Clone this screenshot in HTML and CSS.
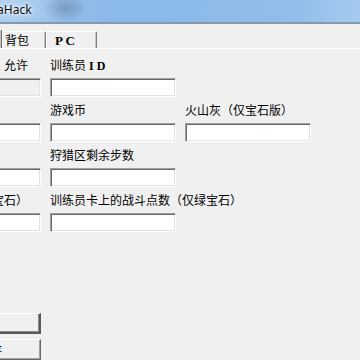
FILE: index.html
```html
<!DOCTYPE html>
<html lang="zh-CN">
<head>
    <meta charset="UTF-8">
    <meta name="viewport" content="width=device-width, initial-scale=1.0">
    <title>GbaHack</title>
    <link rel="stylesheet" href="styles.css">
</head>
<body>
    <div class="window">
        <div class="titlebar"><span class="title">GbaHack</span></div>

        <div class="tabs">
            <div class="tab selected">基本</div>
            <div class="tab tab-bag">背包</div>
            <div class="tab tab-pc"><span class="latin">P C</span></div>
        </div>

        <div class="panel">
            <div class="fields">
                <!-- row 1 -->
                <div class="field">
                    <div class="label right">修改训练员　 允许</div>
                    <input type="text" class="box" disabled>
                </div>
                <div class="field">
                    <div class="label">训练员<span class="latin id">I D</span></div>
                    <input type="text" class="box">
                </div>
                <div class="field"></div>

                <!-- row 2 -->
                <div class="field">
                    <div class="label">金钱</div>
                    <input type="text" class="box">
                </div>
                <div class="field">
                    <div class="label">游戏币</div>
                    <input type="text" class="box">
                </div>
                <div class="field">
                    <div class="label">火山灰（仅宝石版）</div>
                    <input type="text" class="box">
                </div>

                <!-- row 3 -->
                <div class="field">
                    <div class="label">时间</div>
                    <input type="text" class="box">
                </div>
                <div class="field">
                    <div class="label">狩猎区剩余步数</div>
                    <input type="text" class="box">
                </div>
                <div class="field"></div>

                <!-- row 4 -->
                <div class="field">
                    <div class="label right">（仅宝石）</div>
                    <input type="text" class="box">
                </div>
                <div class="field">
                    <div class="label">训练员卡上的战斗点数（仅绿宝石）</div>
                    <input type="text" class="box">
                </div>
                <div class="field"></div>
            </div>

            <div class="buttons">
                <button class="btn default">读取</button>
                <button class="btn">写入内存</button>
            </div>
        </div>
    </div>
</body>
</html>
```

FILE: styles.css
```css
body {
    margin: 0;
    width: 360px;
    height: 360px;
    overflow: hidden;
    background: #f0f0f0;
    font-family: "Noto Sans CJK SC", "Noto Sans", sans-serif;
    font-size: 12px;
    color: #000;
}
.window {
    margin-left: -85px;
    width: 470px;
}
.titlebar {
    height: 22px;
    border-bottom: 2px solid #8599b0;
    background:
        radial-gradient(ellipse 22px 14px at 150px 8px, rgba(90, 110, 140, 0.45), rgba(90, 110, 140, 0) 100%),
        radial-gradient(ellipse 70px 30px at 90px 8px, rgba(255, 255, 255, 0.35), rgba(255, 255, 255, 0) 100%),
        linear-gradient(100deg, #9cc5ec 0%, #8bb9e8 45%, #90bde9 80%, #aed0f1 100%);
    padding-left: 66px;
    display: flex;
    align-items: center;
}
.title {
    font-family: "Noto Sans", sans-serif;
    font-size: 12px;
    color: #101010;
    text-shadow: 0 0 6px #fff, 0 0 3px #fff;
    margin-top: -3px;
}
.latin {
    font-family: "Liberation Serif", serif;
    font-weight: bold;
}
.tabs {
    height: 24px;
    display: flex;
    align-items: flex-end;
    padding-left: 2px;
}
.tab {
    box-sizing: border-box;
    height: 17px;
    line-height: 15px;
    border-top: 1px solid #fff;
    border-left: 1px solid #fff;
    border-right: 1px solid #808080;
    box-shadow: inset -1px 0 #c4c4c4;
    border-top-right-radius: 2px;
    white-space: nowrap;
}
.tab.selected {
    width: 85px;
    height: 19px;
    padding-left: 4px;
    border-right-color: #6a6a6a;
}
.tab-bag {
    width: 44px;
    padding-left: 2px;
}
.tab-pc {
    width: 51px;
    padding-left: 8px;
    font-size: 13px;
}
.panel {
    border-top: 1px solid #fff;
    padding-top: 8px;
}
.fields {
    display: grid;
    grid-template-columns: 125px 125px 125px;
    column-gap: 10px;
    row-gap: 5px;
}
.field {
    height: 40px;
    display: flex;
    flex-direction: column;
}
.label {
    height: 16px;
    line-height: 16px;
    white-space: pre;
}
.label.right {
    display: flex;
    justify-content: flex-end;
    padding-right: 12px;
}
.id {
    margin-left: 3px;
    font-size: 12px;
}
.box {
    box-sizing: border-box;
    margin: 5px 0 0;
    width: 126px;
    height: 19px;
    padding: 0 2px;
    background: #fff;
    border-top: 1px solid #a0a0a0;
    border-left: 1px solid #a0a0a0;
    border-right: 1px solid #fff;
    border-bottom: 1px solid #fff;
    box-shadow: inset 1px 1px #696969, inset -1px -1px #e3e3e3;
    outline: none;
}
.box:disabled {
    background: #f0f0f0;
}
.buttons {
    margin-top: 81px;
    width: 126px;
    display: flex;
    flex-direction: column;
    gap: 5px;
}
.btn {
    box-sizing: border-box;
    height: 21px;
    padding: 0;
    background: #f0f0f0;
    font-family: "Noto Sans CJK SC", sans-serif;
    font-size: 12px;
    color: #000;
    border-top: 1px solid #fff;
    border-left: 1px solid #fff;
    border-right: 1px solid #696969;
    border-bottom: 1px solid #696969;
    box-shadow: inset -1px -1px #a0a0a0;
}
.btn.default {
    border-right: 2px solid #595959;
    border-bottom: 2px solid #595959;
    box-shadow: inset -1px -1px #8a8a8a;
}
```
